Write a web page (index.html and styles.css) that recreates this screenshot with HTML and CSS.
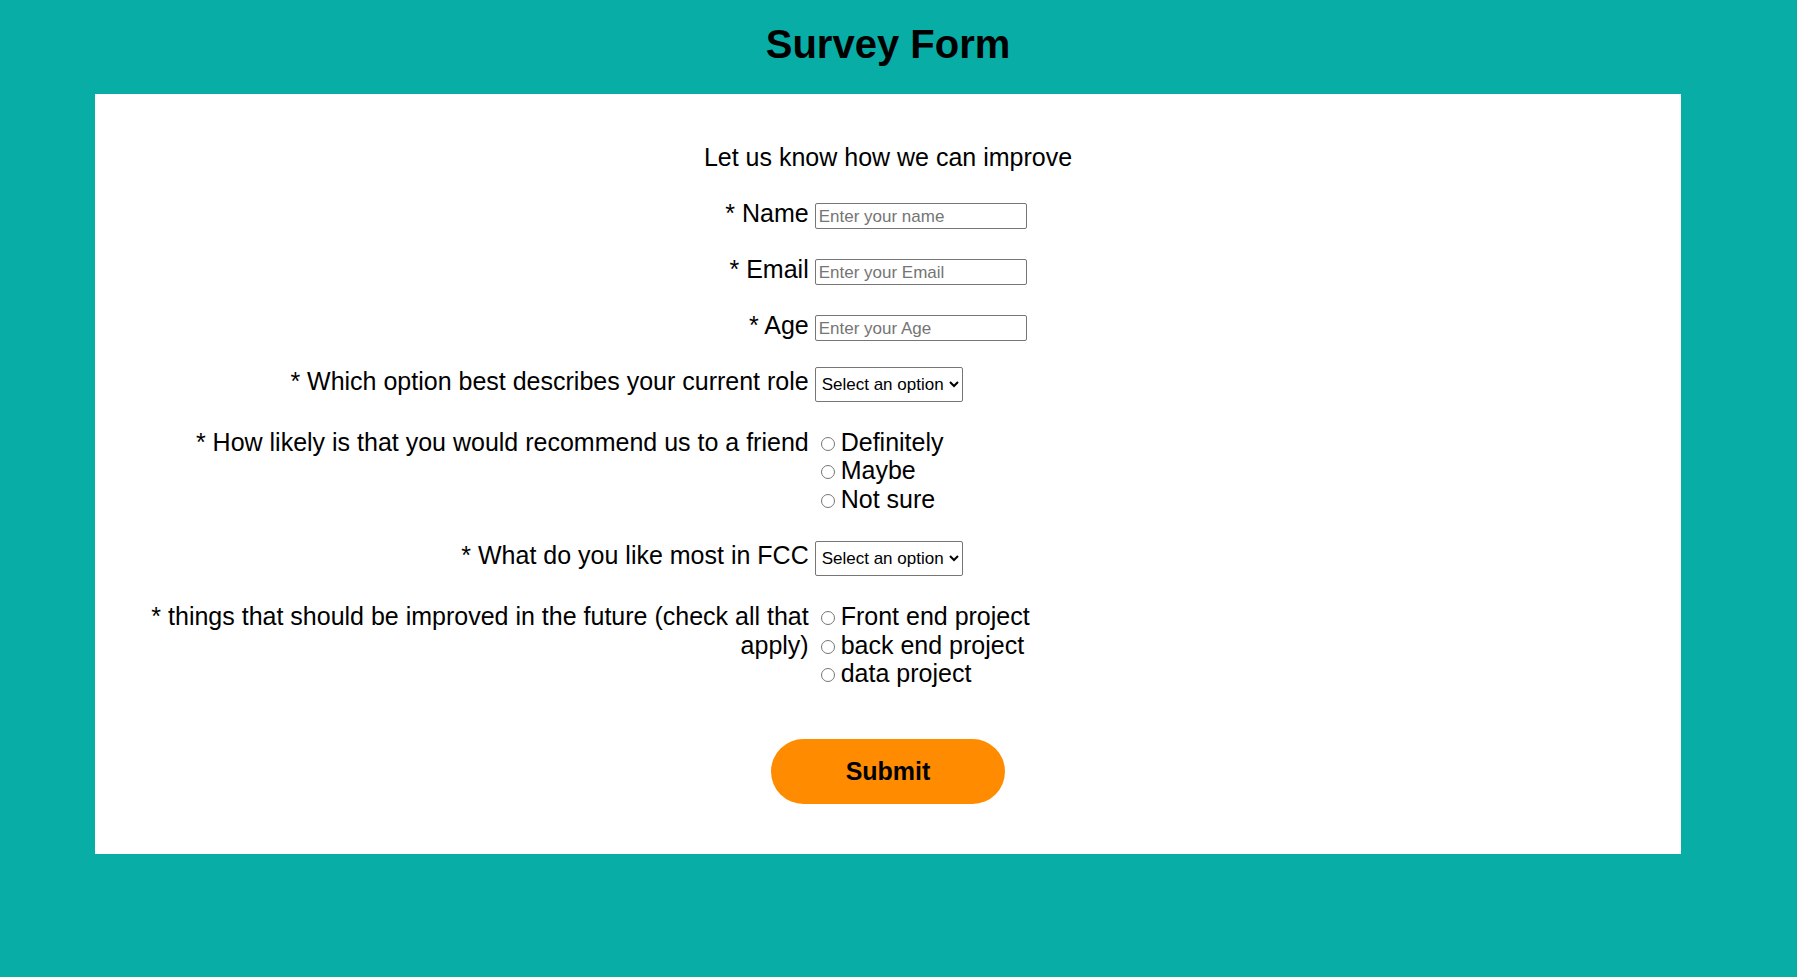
FILE: index.html
```html
<!DOCTYPE html>
<html lang="en">
<head>
<meta charset="utf-8">
<title>Survey Form</title>
<link rel="stylesheet" href="styles.css">
</head>
<body>
<div class="page">
  <h1 class="title" id="title">Survey Form</h1>
  <form class="card" id="survey-form">
    <p class="intro" id="description">Let us know how we can improve</p>

    <div class="row row-loose">
      <label class="label" for="name">* Name</label>
      <div class="control"><input class="text-input" id="name" type="text" placeholder="Enter your name"></div>
    </div>

    <div class="row">
      <label class="label" for="email">* Email</label>
      <div class="control"><input class="text-input" id="email" type="email" placeholder="Enter your Email"></div>
    </div>

    <div class="row">
      <label class="label" for="number">* Age</label>
      <div class="control"><input class="text-input" id="number" type="number" placeholder="Enter your Age"></div>
    </div>

    <div class="row">
      <label class="label" for="dropdown">* Which option best describes your current role</label>
      <div class="control">
        <select class="select" id="dropdown">
          <option>Select an option</option>
          <option>Student</option>
          <option>Full time job</option>
        </select>
      </div>
    </div>

    <div class="row">
      <div class="label">* How likely is that you would recommend us to a friend</div>
      <div class="control options">
        <label class="option"><input class="radio" type="radio" name="recommend" value="definitely">Definitely</label>
        <label class="option"><input class="radio" type="radio" name="recommend" value="maybe">Maybe</label>
        <label class="option"><input class="radio" type="radio" name="recommend" value="not-sure">Not sure</label>
      </div>
    </div>

    <div class="row row-loose">
      <label class="label" for="fcc">* What do you like most in FCC</label>
      <div class="control">
        <select class="select" id="fcc">
          <option>Select an option</option>
          <option>Challenges</option>
          <option>Projects</option>
        </select>
      </div>
    </div>

    <div class="row">
      <div class="label">* things that should be improved in the future (check all that apply)</div>
      <div class="control options">
        <label class="option"><input class="radio" type="radio" name="improve" value="front">Front end project</label>
        <label class="option"><input class="radio" type="radio" name="improve" value="back">back end project</label>
        <label class="option"><input class="radio" type="radio" name="improve" value="data">data project</label>
      </div>
    </div>

    <div class="actions">
      <button class="submit" id="submit" type="submit">Submit</button>
    </div>
  </form>
</div>
</body>
</html>
```

FILE: styles.css
```css
html, body {
  margin: 0;
  padding: 0;
}

body {
  background: #08ada5;
  min-height: 100vh;
  font-family: "Liberation Sans", Arial, sans-serif;
  color: #000;
}

.page {
  padding: 21px 116px 0 95px;
}

.title {
  margin: 0;
  text-align: center;
  font-size: 40px;
  line-height: 46px;
  font-weight: bold;
}

.card {
  margin-top: 27px;
  background: #fff;
  padding: 49px 0 50px;
}

.intro {
  margin: 0;
  text-align: center;
  font-size: 25px;
  line-height: 28.7px;
}

.row {
  display: flex;
  align-items: baseline;
  margin-top: 26px;
  font-size: 25px;
  line-height: 28.7px;
}

.row-loose {
  margin-top: 27px;
}

.label {
  flex: 0 0 45%;
  text-align: right;
}

.control {
  margin-left: 6px;
}

.text-input {
  box-sizing: border-box;
  width: 212px;
  height: 26px;
  padding: 3px 3px 1px;
  font-family: "Liberation Sans", Arial, sans-serif;
  font-size: 17px;
  border: 1px solid #767676;
  border-radius: 2px;
  color: #000;
  background: #fff;
}

.text-input::placeholder {
  color: #757575;
}

.text-input::-webkit-outer-spin-button,
.text-input::-webkit-inner-spin-button {
  -webkit-appearance: none;
  margin: 0;
}

.text-input[type="number"] {
  -moz-appearance: textfield;
}

.select {
  box-sizing: border-box;
  width: 148px;
  height: 35px;
  padding: 0 2px;
  font-family: "Liberation Sans", Arial, sans-serif;
  font-size: 17px;
  color: #000;
  background: #fff;
  border: 1px solid #767676;
  border-radius: 2px;
}

.options {
  display: flex;
  flex-direction: column;
}

.option {
  display: block;
  white-space: nowrap;
}

.radio {
  width: 14px;
  height: 14px;
  margin: 0 6px 1px 6px;
  vertical-align: baseline;
}

.actions {
  display: flex;
  justify-content: center;
  margin-top: 51px;
}

.submit {
  width: 234px;
  height: 65px;
  border: none;
  border-radius: 33px;
  background: #ff8c00;
  color: #000;
  font-family: "Liberation Sans", Arial, sans-serif;
  font-size: 25px;
  font-weight: bold;
  cursor: pointer;
}
```
